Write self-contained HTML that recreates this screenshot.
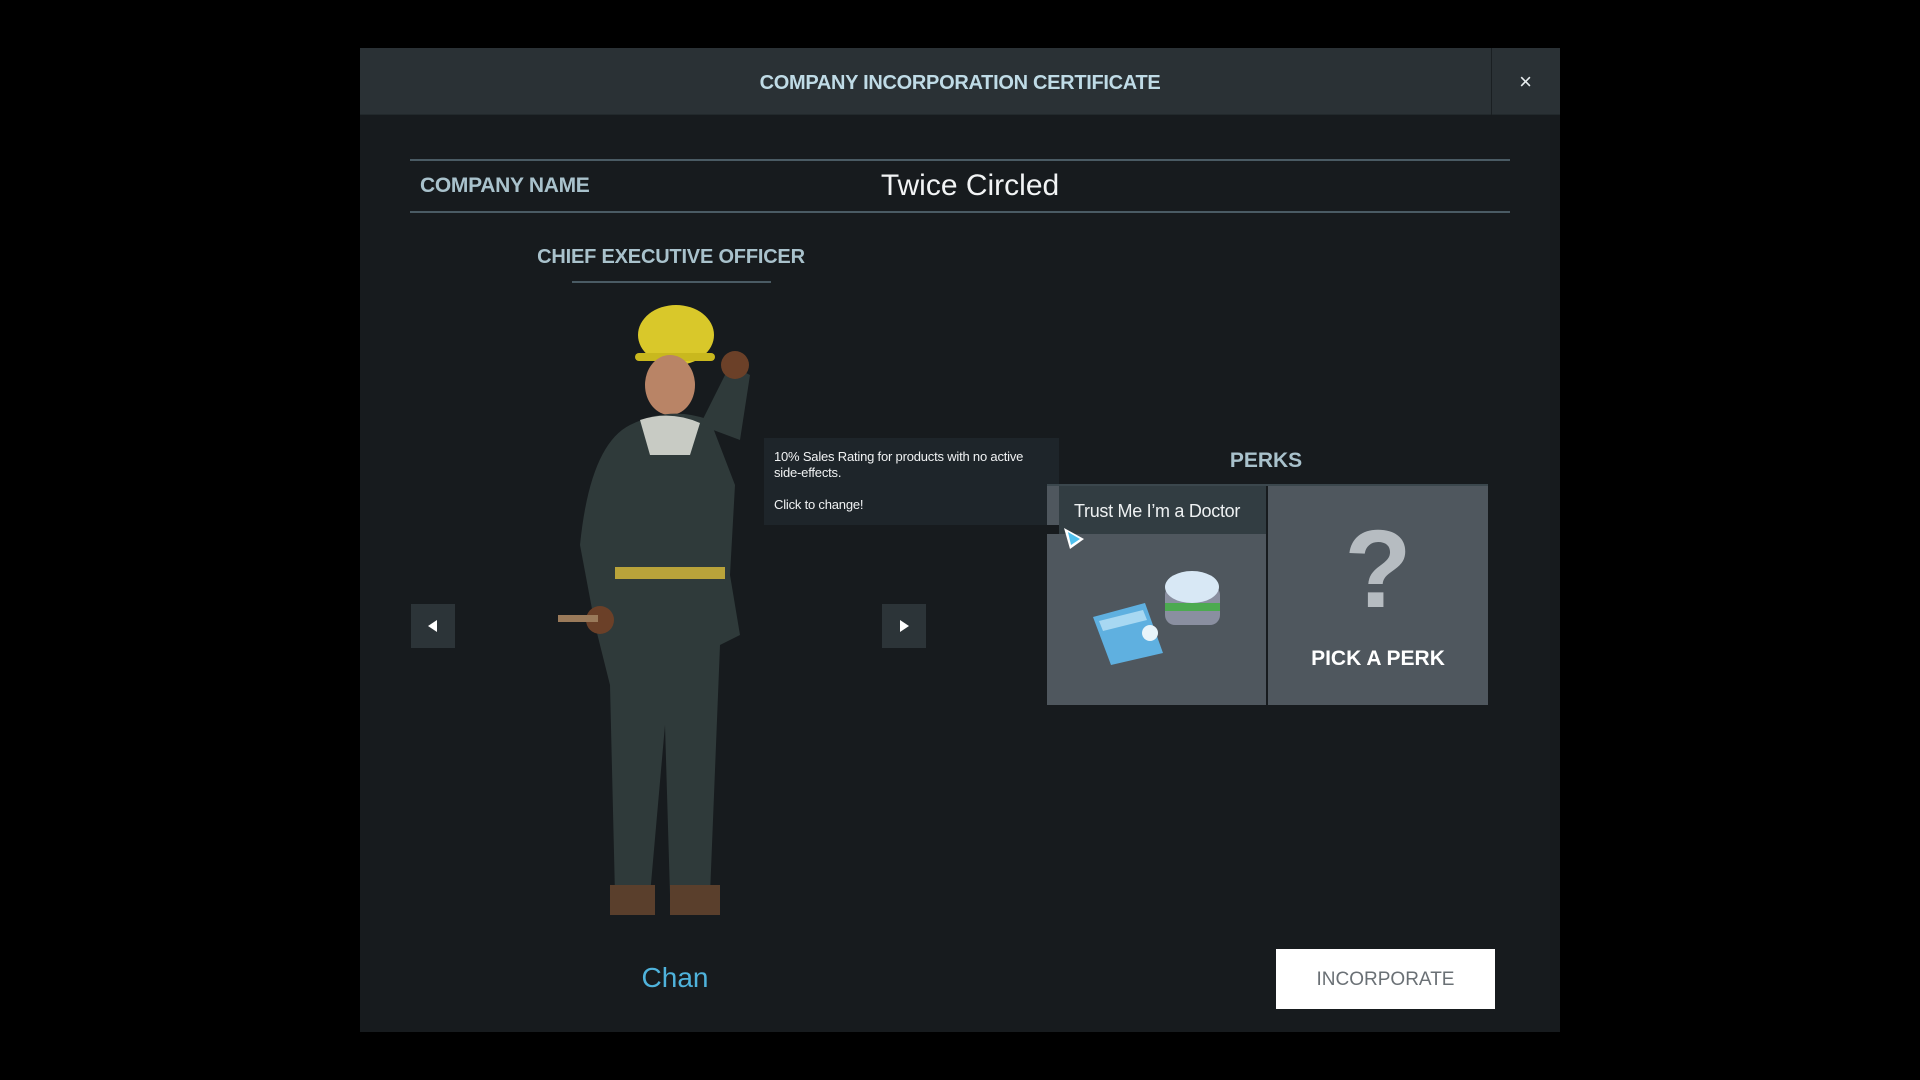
<!DOCTYPE html>
<html><head><style>
*{margin:0;padding:0;box-sizing:border-box}
body{width:1920px;height:1080px;background:#000;position:relative;overflow:hidden;font-family:"Liberation Sans",sans-serif}
.a{position:absolute}
</style></head><body>
<div class="a" style="left:360px;top:48px;width:1200px;height:984px;background:#171b1e"></div>
<div class="a" style="left:360px;top:48px;width:1200px;height:67px;background:#2a3135;border-bottom:1px solid #22292c"></div>
<div class="a" style="left:1491px;top:48px;width:1px;height:67px;background:#1a1f22"></div>
<div class="a" style="left:360px;top:50px;width:1200px;height:67px;line-height:67px;text-align:center;color:#bfdbe6;font-weight:bold;font-size:20px;letter-spacing:-0.3px">COMPANY INCORPORATION CERTIFICATE</div>
<div class="a" style="left:1491px;top:48px;width:69px;height:67px;line-height:67px;text-align:center;color:#e8eef0;font-size:22px">×</div>

<div class="a" style="left:410px;top:159px;width:1100px;height:2px;background:#4a5b64"></div>
<div class="a" style="left:410px;top:211px;width:1100px;height:2px;background:#4a5b64"></div>
<div class="a" style="left:420px;top:174px;color:#a9c2cc;font-weight:bold;font-size:21px;letter-spacing:-0.3px">COMPANY NAME</div>
<div class="a" style="left:770px;top:169px;width:400px;text-align:center;color:#f2f4f5;font-size:30px">Twice Circled</div>

<div class="a" style="left:471px;top:246px;width:400px;text-align:center;color:#a9c2cc;font-weight:bold;font-size:20px;letter-spacing:-0.2px">CHIEF EXECUTIVE OFFICER</div>
<div class="a" style="left:572px;top:281px;width:199px;height:2px;background:#4a5b64"></div>

<svg class="a" style="left:540px;top:305px" width="250" height="630" viewBox="0 0 250 630">
<ellipse cx="136" cy="30" rx="38" ry="30" fill="#d9c82a"/>
<rect x="95" y="48" width="80" height="8" rx="4" fill="#c9b81e"/>
<ellipse cx="130" cy="80" rx="25" ry="30" fill="#b98466"/>
<path d="M90 120 Q130 100 170 115 L195 180 L190 270 L200 330 L180 340 L170 590 L130 590 L125 420 L110 590 L75 590 L70 380 L55 320 L40 240 Q50 140 90 120Z" fill="#2f3a3a"/>
<path d="M100 115 Q130 105 160 118 L150 150 L110 150Z" fill="#c8cbc4"/>
<rect x="75" y="262" width="110" height="12" fill="#b9a33a"/>
<path d="M160 120 L190 60 L210 70 L200 135Z" fill="#2f3a3a"/>
<circle cx="195" cy="60" r="14" fill="#6b4028"/>
<circle cx="60" cy="315" r="14" fill="#6b4028"/>
<rect x="18" y="310" width="40" height="7" fill="#9a7a5a"/>
<rect x="70" y="580" width="45" height="30" fill="#5a3f2c"/>
<rect x="130" y="580" width="50" height="30" fill="#5a3f2c"/>
</svg>

<div class="a" style="left:411px;top:604px;width:44px;height:44px;background:#2c3438"></div>
<svg class="a" style="left:411px;top:604px" width="44" height="44"><path d="M26 16 L17 22 L26 28Z" fill="#fff"/></svg>
<div class="a" style="left:882px;top:604px;width:44px;height:44px;background:#2c3438"></div>
<svg class="a" style="left:882px;top:604px" width="44" height="44"><path d="M18 16 L27 22 L18 28Z" fill="#fff"/></svg>

<div class="a" style="left:764px;top:438px;width:295px;height:87px;background:#1e252a;color:#f0f2f3;font-size:13px;padding:11px 10px;line-height:16px;letter-spacing:-0.2px">10% Sales Rating for products with no active side-effects.<br><br>Click to change!</div>

<div class="a" style="left:1066px;top:449px;width:400px;text-align:center;color:#a9c2cc;font-weight:bold;font-size:21px">PERKS</div>
<div class="a" style="left:1047px;top:484px;width:441px;height:2px;background:#3b474d"></div>
<div class="a" style="left:1047px;top:486px;width:219px;height:219px;background:#4f575e"></div>
<div class="a" style="left:1059px;top:486px;width:207px;height:48px;background:#323d42;color:#eef1f2;font-size:18px;line-height:50px;padding-left:15px;letter-spacing:-0.3px">Trust Me I’m a Doctor</div>
<div class="a" style="left:1047px;top:525px;width:12px;height:9px;background:#171b1e"></div>
<svg class="a" style="left:1060px;top:525px" width="30" height="30"><path d="M4 3 L24 14 L10 24Z" fill="#fff"/><path d="M8 7 L20 14 L11 20Z" fill="#4fc0ee"/></svg>
<svg class="a" style="left:1085px;top:565px" width="150" height="110">
<path d="M8 52 L60 38 L78 88 L26 100Z" fill="#5fb0e0"/>
<path d="M14 56 L58 45 L62 55 L18 66Z" fill="#a8d8f2"/>
<circle cx="65" cy="68" r="8" fill="#e8f4fa"/>
<rect x="80" y="20" width="55" height="40" rx="10" fill="#8a8fa0"/>
<ellipse cx="107" cy="22" rx="27" ry="16" fill="#d8e8f5"/>
<rect x="80" y="38" width="55" height="8" fill="#4caa50"/>
</svg>

<div class="a" style="left:1268px;top:486px;width:220px;height:219px;background:#4f575e"></div>
<div class="a" style="left:1268px;top:505px;width:220px;text-align:center;color:#b6bcc1;font-weight:bold;font-size:110px;line-height:130px">?</div>
<div class="a" style="left:1268px;top:647px;width:220px;text-align:center;color:#fff;font-weight:bold;font-size:21px">PICK A PERK</div>

<div class="a" style="left:475px;top:962px;width:400px;text-align:center;color:#4fb3dc;font-size:28px">Chan</div>

<div class="a" style="left:1276px;top:949px;width:219px;height:60px;background:#fff;color:#6a7075;font-size:19px;line-height:62px;text-align:center">INCORPORATE</div>
</body></html>
